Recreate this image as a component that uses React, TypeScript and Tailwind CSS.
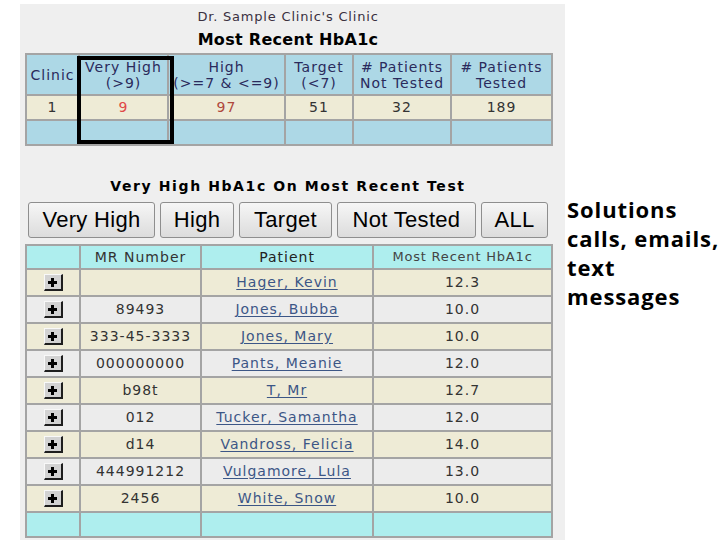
import React from 'react';

const summaryHeaders = [
  { top: 'Clinic', bottom: null },
  { top: 'Very High', bottom: '(>9)' },
  { top: 'High', bottom: '(>=7 & <=9)' },
  { top: 'Target', bottom: '(<7)' },
  { top: '# Patients', bottom: 'Not Tested' },
  { top: '# Patients', bottom: 'Tested' },
];

const summaryValues = [
  { v: '1', cls: 'text-[#333333]' },
  { v: '9', cls: 'text-[#e04848]' },
  { v: '97', cls: 'text-[#b0483c]' },
  { v: '51', cls: 'text-[#333333]' },
  { v: '32', cls: 'text-[#333333]' },
  { v: '189', cls: 'text-[#333333]' },
];

const patients = [
  { mr: '', name: 'Hager, Kevin', a1c: '12.3' },
  { mr: '89493', name: 'Jones, Bubba', a1c: '10.0' },
  { mr: '333-45-3333', name: 'Jones, Mary', a1c: '10.0' },
  { mr: '000000000', name: 'Pants, Meanie', a1c: '12.0' },
  { mr: 'b98t', name: 'T, Mr', a1c: '12.7' },
  { mr: '012', name: 'Tucker, Samantha', a1c: '12.0' },
  { mr: 'd14', name: 'Vandross, Felicia', a1c: '14.0' },
  { mr: '444991212', name: 'Vulgamore, Lula', a1c: '13.0' },
  { mr: '2456', name: 'White, Snow', a1c: '10.0' },
];

const filters = [
  { label: 'Very High', w: 'w-[127px]' },
  { label: 'High', w: 'w-[74px]' },
  { label: 'Target', w: 'w-[93px]' },
  { label: 'Not Tested', w: 'w-[139px]' },
  { label: 'ALL', w: 'w-[67px]' },
];

function PlusButton() {
  return (
    <span className="inline-flex h-[17px] w-[19px] items-center justify-center border-t border-l border-t-[#f8f8f8] border-l-[#f8f8f8] border-r-2 border-b-2 border-r-[#1e1e1e] border-b-[#1e1e1e] bg-[#d2d2d2] align-middle">
      <svg width="9" height="9" viewBox="0 0 9 9">
        <rect x="3" y="0" width="3" height="9" fill="#000" />
        <rect x="0" y="3" width="9" height="3" fill="#000" />
      </svg>
    </span>
  );
}

export default function App() {
  const verdana = { fontFamily: '"DejaVu Sans", Verdana, sans-serif' };
  const cell = 'border-2 border-[#a4a4a4] text-center';

  return (
    <div className="flex h-[540px] w-[720px] overflow-hidden bg-white">
      <div
        className="ml-[20px] mt-[4px] flex w-[545px] flex-col bg-[#efefef] pl-[5px] pr-[14px]"
        style={verdana}
      >
        <div className="mt-[4px] text-center text-[13px] leading-[18px] tracking-[0.8px] text-[#3a3040]">
          Dr. Sample Clinic's Clinic
        </div>
        <div className="mt-[4px] text-center text-[16px] font-bold leading-[20px] tracking-[0.3px] text-black">
          Most Recent HbA1c
        </div>

        <div className="relative mt-[3px] w-[526px]">
          <table className="w-[526px] table-fixed border-collapse text-[14px] tracking-[1px]">
            <colgroup>
              <col className="w-[53px]" />
              <col className="w-[89px]" />
              <col className="w-[117px]" />
              <col className="w-[68px]" />
              <col className="w-[98px]" />
              <col className="w-[101px]" />
            </colgroup>
            <thead>
              <tr className="h-[41px] bg-[#add8e6]">
                {summaryHeaders.map((h, i) => (
                  <th key={i} className={`${cell} px-0 font-normal leading-[16px] text-[#2a2a5c]`}>
                    <div>{h.top}</div>
                    {h.bottom && <div className="whitespace-nowrap">{h.bottom}</div>}
                  </th>
                ))}
              </tr>
            </thead>
            <tbody>
              <tr className="h-[25px] bg-[#eeebd6]">
                {summaryValues.map((c, i) => (
                  <td key={i} className={`${cell} ${c.cls}`}>
                    {c.v}
                  </td>
                ))}
              </tr>
              <tr className="h-[25px] bg-[#add8e6]">
                {summaryValues.map((_, i) => (
                  <td key={i} className={cell} />
                ))}
              </tr>
            </tbody>
          </table>
          <div className="pointer-events-none absolute left-[52px] top-[3px] h-[88px] w-[97px] border-[4px] border-black" />
        </div>

        <div className="mt-[31px] text-center text-[14px] font-bold leading-[18px] tracking-[1.6px] text-black">
          Very High HbA1c On Most Recent Test
        </div>

        <div className="mt-[7px] flex gap-[5px] pl-[3px]">
          {filters.map((f) => (
            <button
              key={f.label}
              type="button"
              className={`${f.w} h-[36px] rounded-[3px] border border-[#8e8e8e] bg-gradient-to-b from-[#f6f6f6] to-[#dcdcdc] text-[22px] leading-none tracking-[0.3px] text-black`}
              style={{ fontFamily: '"Liberation Sans", Arial, sans-serif' }}
            >
              {f.label}
            </button>
          ))}
        </div>

        <table className="mt-[6px] w-[526px] table-fixed border-collapse text-[14px] tracking-[1px]">
          <colgroup>
            <col className="w-[54px]" />
            <col className="w-[121px]" />
            <col className="w-[172px]" />
            <col className="w-[179px]" />
          </colgroup>
          <thead>
            <tr className="h-[24px] bg-[#aeeeee]">
              <th className={`${cell} font-normal`} />
              <th className={`${cell} font-normal text-[#333]`}>MR Number</th>
              <th className={`${cell} font-normal text-[#222]`}>Patient</th>
              <th className={`${cell} whitespace-nowrap text-[13px] font-normal tracking-[0.8px] text-[#444]`}>
                Most Recent HbA1c
              </th>
            </tr>
          </thead>
          <tbody>
            {patients.map((p, i) => (
              <tr key={p.name} className={`h-[27px] ${i % 2 === 0 ? 'bg-[#eeebd6]' : 'bg-[#ececec]'}`}>
                <td className={`${cell} leading-none`}>
                  <PlusButton />
                </td>
                <td className={`${cell} text-[#333]`}>{p.mr}</td>
                <td className={cell}>
                  <a href="#" className="whitespace-nowrap text-[#3c5686] underline underline-offset-2">
                    {p.name}
                  </a>
                </td>
                <td className={`${cell} text-[#333]`}>{p.a1c}</td>
              </tr>
            ))}
            <tr className="h-[25px] bg-[#aeeeee]">
              <td className={cell} />
              <td className={cell} />
              <td className={cell} />
              <td className={cell} />
            </tr>
          </tbody>
        </table>
      </div>

      <div
        className="ml-[2px] mt-[195px] text-[22px] font-bold leading-[29px] tracking-[0.9px] text-black"
        style={{ fontFamily: '"Open Sans", "Noto Sans", sans-serif' }}
      >
        <div>Solutions</div>
        <div className="whitespace-nowrap">calls, emails,</div>
        <div>text</div>
        <div>messages</div>
      </div>
    </div>
  );
}
